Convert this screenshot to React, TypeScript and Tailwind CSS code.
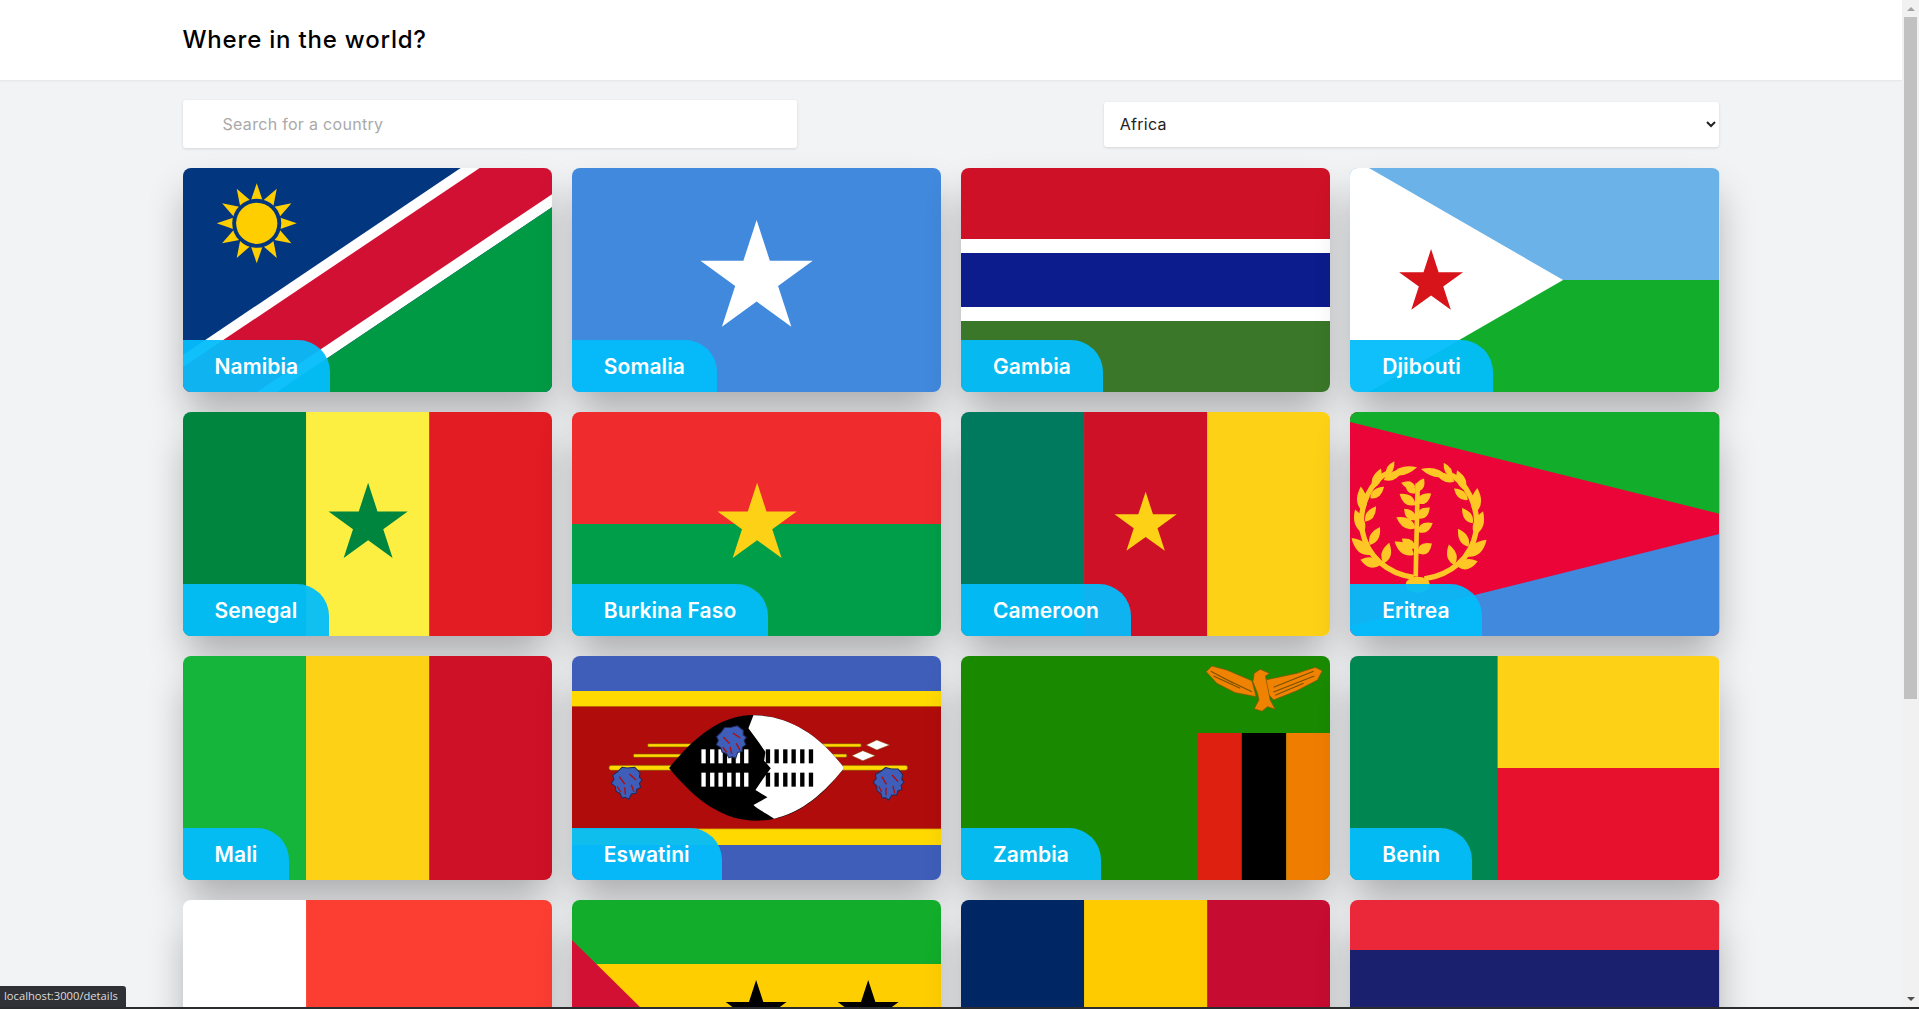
import type { ReactNode } from "react";

// all flags are drawn on a 369x224 box, the size of one card
function star(cx: number, cy: number, r: number) {
  const pts: string[] = [];
  for (let i = 0; i < 10; i++) {
    const rad = i % 2 === 0 ? r : r * 0.382;
    const a = (Math.PI / 5) * i - Math.PI / 2;
    pts.push(`${cx + rad * Math.cos(a)},${cy + rad * Math.sin(a)}`);
  }
  return pts.join(" ");
}

function leaf(x: number, y: number, deg: number, len: number, wid: number) {
  const a = (deg * Math.PI) / 180;
  const tx = x + len * Math.cos(a);
  const ty = y + len * Math.sin(a);
  const mx = x + len * 0.4 * Math.cos(a);
  const my = y + len * 0.4 * Math.sin(a);
  const nx = -Math.sin(a) * wid;
  const ny = Math.cos(a) * wid;
  return `M${x} ${y}Q${mx + nx} ${my + ny} ${tx} ${ty}Q${mx - nx} ${my - ny} ${x} ${y}Z`;
}

function Flag({ children }: { children: ReactNode }) {
  return (
    <svg viewBox="0 0 369 224" preserveAspectRatio="none" className="block w-full h-full">
      {children}
    </svg>
  );
}

function Stripes({ colors }: { colors: string[] }) {
  return (
    <>
      {colors.map((c, i) => (
        <rect key={i} x={i * 123} y="0" width="123.5" height="224" fill={c} />
      ))}
    </>
  );
}

function Namibia() {
  const rays = Array.from({ length: 12 }, (_, i) => {
    const a = (i * Math.PI) / 6 - Math.PI / 2;
    const w = 0.27;
    const p = (r: number, t: number) => `${73.7 + r * Math.cos(t)},${55.3 + r * Math.sin(t)}`;
    return [p(40, a), p(23, a - w), p(23, a + w)].join(" ");
  });
  return (
    <Flag>
      <rect width="369" height="224" fill="#02367f" />
      <polygon points="277.5,0 369,0 369,39 94,224 0,224 0,187" fill="#fff" />
      <polygon points="296.5,0 369,0 369,26 74,224 0,224 0,199" fill="#d21034" />
      <polygon points="369,39 369,224 94,224" fill="#009a44" />
      {rays.map((r, i) => (
        <polygon key={i} points={r} fill="#ffce00" />
      ))}
      <circle cx="73.7" cy="55.3" r="24.5" fill="#02367f" />
      <circle cx="73.7" cy="55.3" r="20.6" fill="#ffce00" />
    </Flag>
  );
}

function Somalia() {
  return (
    <Flag>
      <rect width="369" height="224" fill="#4189dd" />
      <polygon points={star(184.5, 111, 59)} fill="#fff" />
    </Flag>
  );
}

function Gambia() {
  return (
    <Flag>
      <rect width="369" height="224" fill="#fff" />
      <rect width="369" height="71" fill="#ce1126" />
      <rect y="85" width="369" height="54" fill="#0c1c8c" />
      <rect y="153" width="369" height="71" fill="#3a7728" />
    </Flag>
  );
}

function Djibouti() {
  return (
    <Flag>
      <rect width="369" height="112" fill="#6ab2e7" />
      <rect y="112" width="369" height="112" fill="#12ad2b" />
      <polygon points="0,0 19,0 213,112 19,224 0,224" fill="#fff" />
      <polygon points={star(81, 114.6, 33.6)} fill="#d7141a" />
    </Flag>
  );
}

function Senegal() {
  return (
    <Flag>
      <Stripes colors={["#00853f", "#fdef42", "#e31b23"]} />
      <polygon points={star(185, 112.3, 41.6)} fill="#00853f" />
    </Flag>
  );
}

function BurkinaFaso() {
  return (
    <Flag>
      <rect width="369" height="112" fill="#ef2b2d" />
      <rect y="112" width="369" height="112" fill="#009e49" />
      <polygon points={star(185, 112.3, 41.6)} fill="#fcd116" />
    </Flag>
  );
}

function Cameroon() {
  return (
    <Flag>
      <Stripes colors={["#007a5e", "#ce1126", "#fcd116"]} />
      <polygon points={star(184.5, 112.4, 32.7)} fill="#fcd116" />
    </Flag>
  );
}

const wreathLeaves: number[][] = [
  [100, 405, 195, 62, 30],
  [70, 375, 222, 76, 32],
  [50, 310, 250, 76, 30],
  [48, 245, 265, 76, 30],
  [78, 175, 292, 64, 26],
  [110, 400, 285, 64, 28],
  [68, 345, 300, 62, 26],
  [55, 275, 305, 56, 24],
  [70, 205, 320, 54, 24],
  [110, 150, 335, 64, 24],
  [135, 132, 345, 78, 24],
  [118, 135, 300, 48, 20],
];

const plantLeaves: number[][] = [
  [200, 375, 215, 70, 32],
  [205, 355, 215, 50, 26],
  [212, 370, 325, 52, 32],
  [212, 305, 330, 52, 28],
  [205, 295, 210, 66, 30],
  [205, 270, 225, 48, 26],
  [210, 265, 320, 50, 28],
  [210, 220, 325, 52, 28],
  [205, 225, 215, 58, 28],
  [205, 190, 225, 42, 24],
  [208, 185, 300, 46, 24],
  [205, 170, 195, 44, 22],
];

function Eritrea() {
  const branch = (
    <>
      <path d="M200 442C120 430 60 380 45 300C35 230 70 150 130 125" fill="none" stroke="#ffc726" strokeWidth="16" />
      {wreathLeaves.map((l, i) => (
        <path key={i} d={leaf(l[0], l[1], l[2], l[3], l[4])} fill="#ffc726" />
      ))}
    </>
  );
  return (
    <Flag>
      <rect width="369" height="224" fill="#ea0437" />
      <polygon points="0,0 369,0 369,101.7 0,10" fill="#12ad2b" />
      <polygon points="369,122 369,224 0,224 0,214" fill="#4189dd" />
      <g transform="translate(-3 18) scale(0.3333)">
        {branch}
        <g transform="translate(432 5) scale(-1 1)">{branch}</g>
        <path d="M206 440L212 160" stroke="#ffc726" strokeWidth="14" fill="none" />
        {plantLeaves.map((l, i) => (
          <path key={i} d={leaf(l[0], l[1], l[2], l[3], l[4])} fill="#ffc726" />
        ))}
        <ellipse cx="212" cy="464" rx="36" ry="24" fill="#ffc726" />
      </g>
    </Flag>
  );
}

function Mali() {
  return (
    <Flag>
      <Stripes colors={["#14b53a", "#fcd116", "#ce1126"]} />
    </Flag>
  );
}

function Tassel({ x, y, rot = 0 }: { x: number; y: number; rot?: number }) {
  return (
    <g transform={`translate(${x} ${y}) rotate(${rot})`}>
      <path
        d="M-14 -46L2 -44L24 -46L40 -30L38 -16L46 -8L38 2L42 14L30 20L28 32L14 34L6 50L-4 44L-14 46L-20 32L-32 26L-34 12L-46 2L-38 -10L-42 -22L-28 -32Z"
        fill="#3e5eb9"
        stroke="#1f2a55"
        strokeWidth="3"
      />
      <path d="M-22 -18L-6 4M8 -26L28 -8M-6 14L-4 36M14 6L22 28M-28 12L-18 28" stroke="#b10c0c" strokeWidth="4" fill="none" />
    </g>
  );
}

function Eswatini() {
  const left = [394, 420, 445, 471, 497, 522];
  const right = [587, 613, 639, 664, 690, 716];
  return (
    <Flag>
      <rect width="369" height="224" fill="#3e5eb9" />
      <rect y="35" width="369" height="154" fill="#ffd900" />
      <rect y="50" width="369" height="123" fill="#b10c0c" />
      <rect y="50" width="369" height="0.8" fill="#c27a00" />
      <rect y="172.4" width="369" height="0.8" fill="#c27a00" />
      <g transform="translate(-2 34) scale(0.3333)">
        <rect x="233" y="161" width="640" height="10" rx="3" fill="#ffd900" stroke="#7a4a00" strokeWidth="2" />
        <polygon points="888,165 920,150 958,165 920,180" fill="#fff" stroke="#7a4a00" strokeWidth="1.5" />
        <rect x="190" y="192" width="640" height="10" rx="3" fill="#ffd900" stroke="#7a4a00" strokeWidth="2" />
        <polygon points="845,197 878,182 915,197 878,212" fill="#fff" stroke="#7a4a00" strokeWidth="1.5" />
        <rect x="117" y="226" width="895" height="15" rx="6" fill="#ffd900" stroke="#7a4a00" strokeWidth="2" />
        <path d="M297 234C380 130 460 75 550 75C650 75 745 130 822 234C745 335 660 392 560 392C460 392 380 335 297 234Z" fill="#000" />
        <path
          d="M550 76C650 75 745 130 822 234C745 330 680 370 612 386C590 370 565 360 550 345L592 322L556 300L580 265L602 235L582 212L586 186L568 160L535 115Z"
          fill="#fff"
        />
        {left.map((x) => (
          <g key={x}>
            <rect x={x} y="178" width="13" height="42" fill="#fff" />
            <rect x={x} y="248" width="13" height="42" fill="#fff" />
          </g>
        ))}
        {right.map((x) => (
          <g key={x}>
            <rect x={x} y="178" width="13" height="42" fill="#000" />
            <rect x={x} y="248" width="13" height="42" fill="#000" />
          </g>
        ))}
        <Tassel x={484} y={156} rot={-8} />
        <Tassel x={170} y={278} />
        <Tassel x={955} y={280} rot={6} />
      </g>
    </Flag>
  );
}

function Zambia() {
  return (
    <Flag>
      <rect width="369" height="224" fill="#198a00" />
      <rect x="236.7" y="77" width="44" height="147" fill="#de2010" />
      <rect x="280.6" y="77" width="44.4" height="147" fill="#000" />
      <rect x="325" y="77" width="44" height="147" fill="#ef7d00" />
      <g transform="translate(219 -6) scale(0.3333)" fill="#ef8200" stroke="#7a5200" strokeWidth="2">
        <path d="M78 65L95 48L140 60L215 92L228 140L165 128L110 100Z" />
        <path d="M255 90L350 70L405 52L426 62L412 90L350 122L280 150L262 130Z" />
        <path d="M222 70L240 58L268 70L256 78L262 110L270 150L285 178L262 170L245 184L222 176L236 150L232 130L218 95Z" />
        <path d="M92 64L160 100M100 78L180 115M125 82L215 125M280 112L400 64M280 126L402 78M285 136L370 100" fill="none" strokeWidth="3.5" />
      </g>
    </Flag>
  );
}

function Benin() {
  return (
    <Flag>
      <rect width="148" height="224" fill="#008751" />
      <rect x="147.5" width="221.5" height="112" fill="#fcd116" />
      <rect x="147.5" y="112" width="221.5" height="112" fill="#e8112d" />
    </Flag>
  );
}

function Madagascar() {
  return (
    <Flag>
      <rect width="123" height="224" fill="#fff" />
      <rect x="123" width="246" height="112" fill="#fc3d32" />
      <rect x="123" y="112" width="246" height="112" fill="#007e3a" />
    </Flag>
  );
}

function SaoTome() {
  return (
    <Flag>
      <rect width="369" height="224" fill="#12ad2b" />
      <rect y="64" width="369" height="96" fill="#ffce00" />
      <polygon points="0,40 73,112 0,184" fill="#d21034" />
      <polygon points={star(184, 112, 32)} fill="#000" />
      <polygon points={star(296, 112, 32)} fill="#000" />
    </Flag>
  );
}

function Chad() {
  return (
    <Flag>
      <Stripes colors={["#002664", "#fecb00", "#c60c30"]} />
    </Flag>
  );
}

function Mauritius() {
  return (
    <Flag>
      <rect width="369" height="50" fill="#ea2839" />
      <rect y="50" width="369" height="62" fill="#1a206d" />
      <rect y="112" width="369" height="56" fill="#ffd500" />
      <rect y="168" width="369" height="56" fill="#00a551" />
    </Flag>
  );
}

// the last row's names sit below the fold, so they get no label
const countries: { name?: string; flag: ReactNode }[] = [
  { name: "Namibia", flag: <Namibia /> },
  { name: "Somalia", flag: <Somalia /> },
  { name: "Gambia", flag: <Gambia /> },
  { name: "Djibouti", flag: <Djibouti /> },
  { name: "Senegal", flag: <Senegal /> },
  { name: "Burkina Faso", flag: <BurkinaFaso /> },
  { name: "Cameroon", flag: <Cameroon /> },
  { name: "Eritrea", flag: <Eritrea /> },
  { name: "Mali", flag: <Mali /> },
  { name: "Eswatini", flag: <Eswatini /> },
  { name: "Zambia", flag: <Zambia /> },
  { name: "Benin", flag: <Benin /> },
  { flag: <Madagascar /> },
  { flag: <SaoTome /> },
  { flag: <Chad /> },
  { flag: <Mauritius /> },
];

function Scrollbar() {
  return (
    <div className="w-[17px] shrink-0 flex flex-col bg-[#f1f1f1]">
      <div className="h-[17px] flex items-center justify-center">
        <div className="w-0 h-0 border-x-[4px] border-x-transparent border-b-[4px] border-b-[#a3a3a3]" />
      </div>
      <div className="flex-1 px-[2px]">
        <div className="h-[682px] bg-[#c1c1c1]" />
      </div>
      <div className="h-[17px] flex items-center justify-center">
        <div className="w-0 h-0 border-x-[4px] border-x-transparent border-t-[4px] border-t-[#505050]" />
      </div>
    </div>
  );
}

export default function App() {
  return (
    <div className="relative h-screen overflow-hidden flex flex-col bg-[#f2f3f5] font-['Inter',sans-serif]">
      <div className="flex flex-1 min-h-0">
        <div className="flex-1 min-w-0 overflow-hidden">
          {/* Header */}
          <header className="h-20 bg-white shadow-[0_1px_2px_rgba(0,0,0,0.06)]">
            <div className="w-[1537px] h-full mx-auto flex items-center">
              <h1 className="text-[24px] font-medium text-black tracking-[0.8px]">Where in the world?</h1>
            </div>
          </header>

          <main className="w-[1537px] mx-auto">
            {/* Filters */}
            <div className="mt-5 mb-5 h-12 flex items-center justify-between">
              <input
                placeholder="Search for a country"
                className="w-2/5 h-12 pl-10 pr-4 bg-white rounded-[3px] text-base tracking-[0.3px] outline-none shadow-[0_1px_3px_rgba(0,0,0,0.12)] placeholder:text-[#a9a9a9]"
              />
              <select className="w-2/5 mr-px h-[45px] pl-3 pr-2 bg-white rounded-[3px] text-base tracking-[0.3px] text-[#222] outline-none shadow-[0_1px_3px_rgba(0,0,0,0.12)]">
                <option>Africa</option>
              </select>
            </div>

            {/* Country cards */}
            <div className="grid grid-cols-4 gap-5 pb-10">
              {countries.map((c, i) => (
                <div
                  key={i}
                  className="relative h-56 rounded-lg overflow-hidden shadow-[0_22px_38px_-4px_rgba(0,0,0,0.3)]"
                >
                  {c.flag}
                  {c.name && (
                    <div className="absolute left-0 bottom-0 h-[52px] px-8 pt-px flex items-center bg-[#03bdfb]/95 rounded-tr-[32px] text-white text-[21px] font-semibold tracking-[0.1px] whitespace-nowrap">
                      {c.name}
                    </div>
                  )}
                </div>
              ))}
            </div>
          </main>
        </div>
        <Scrollbar />
      </div>
      <div className="h-[2px] shrink-0 bg-[#2a2c2e]" />
      {/* Browser status bubble */}
      <div className="absolute left-0 bottom-[2px] h-[21px] w-[126px] pl-[4px] flex items-center bg-[#2f3136] rounded-tr-[3px] text-[#dcdcdc] text-[11.2px] font-['Open_Sans',sans-serif] whitespace-nowrap">
        localhost:3000/details
      </div>
    </div>
  );
}
